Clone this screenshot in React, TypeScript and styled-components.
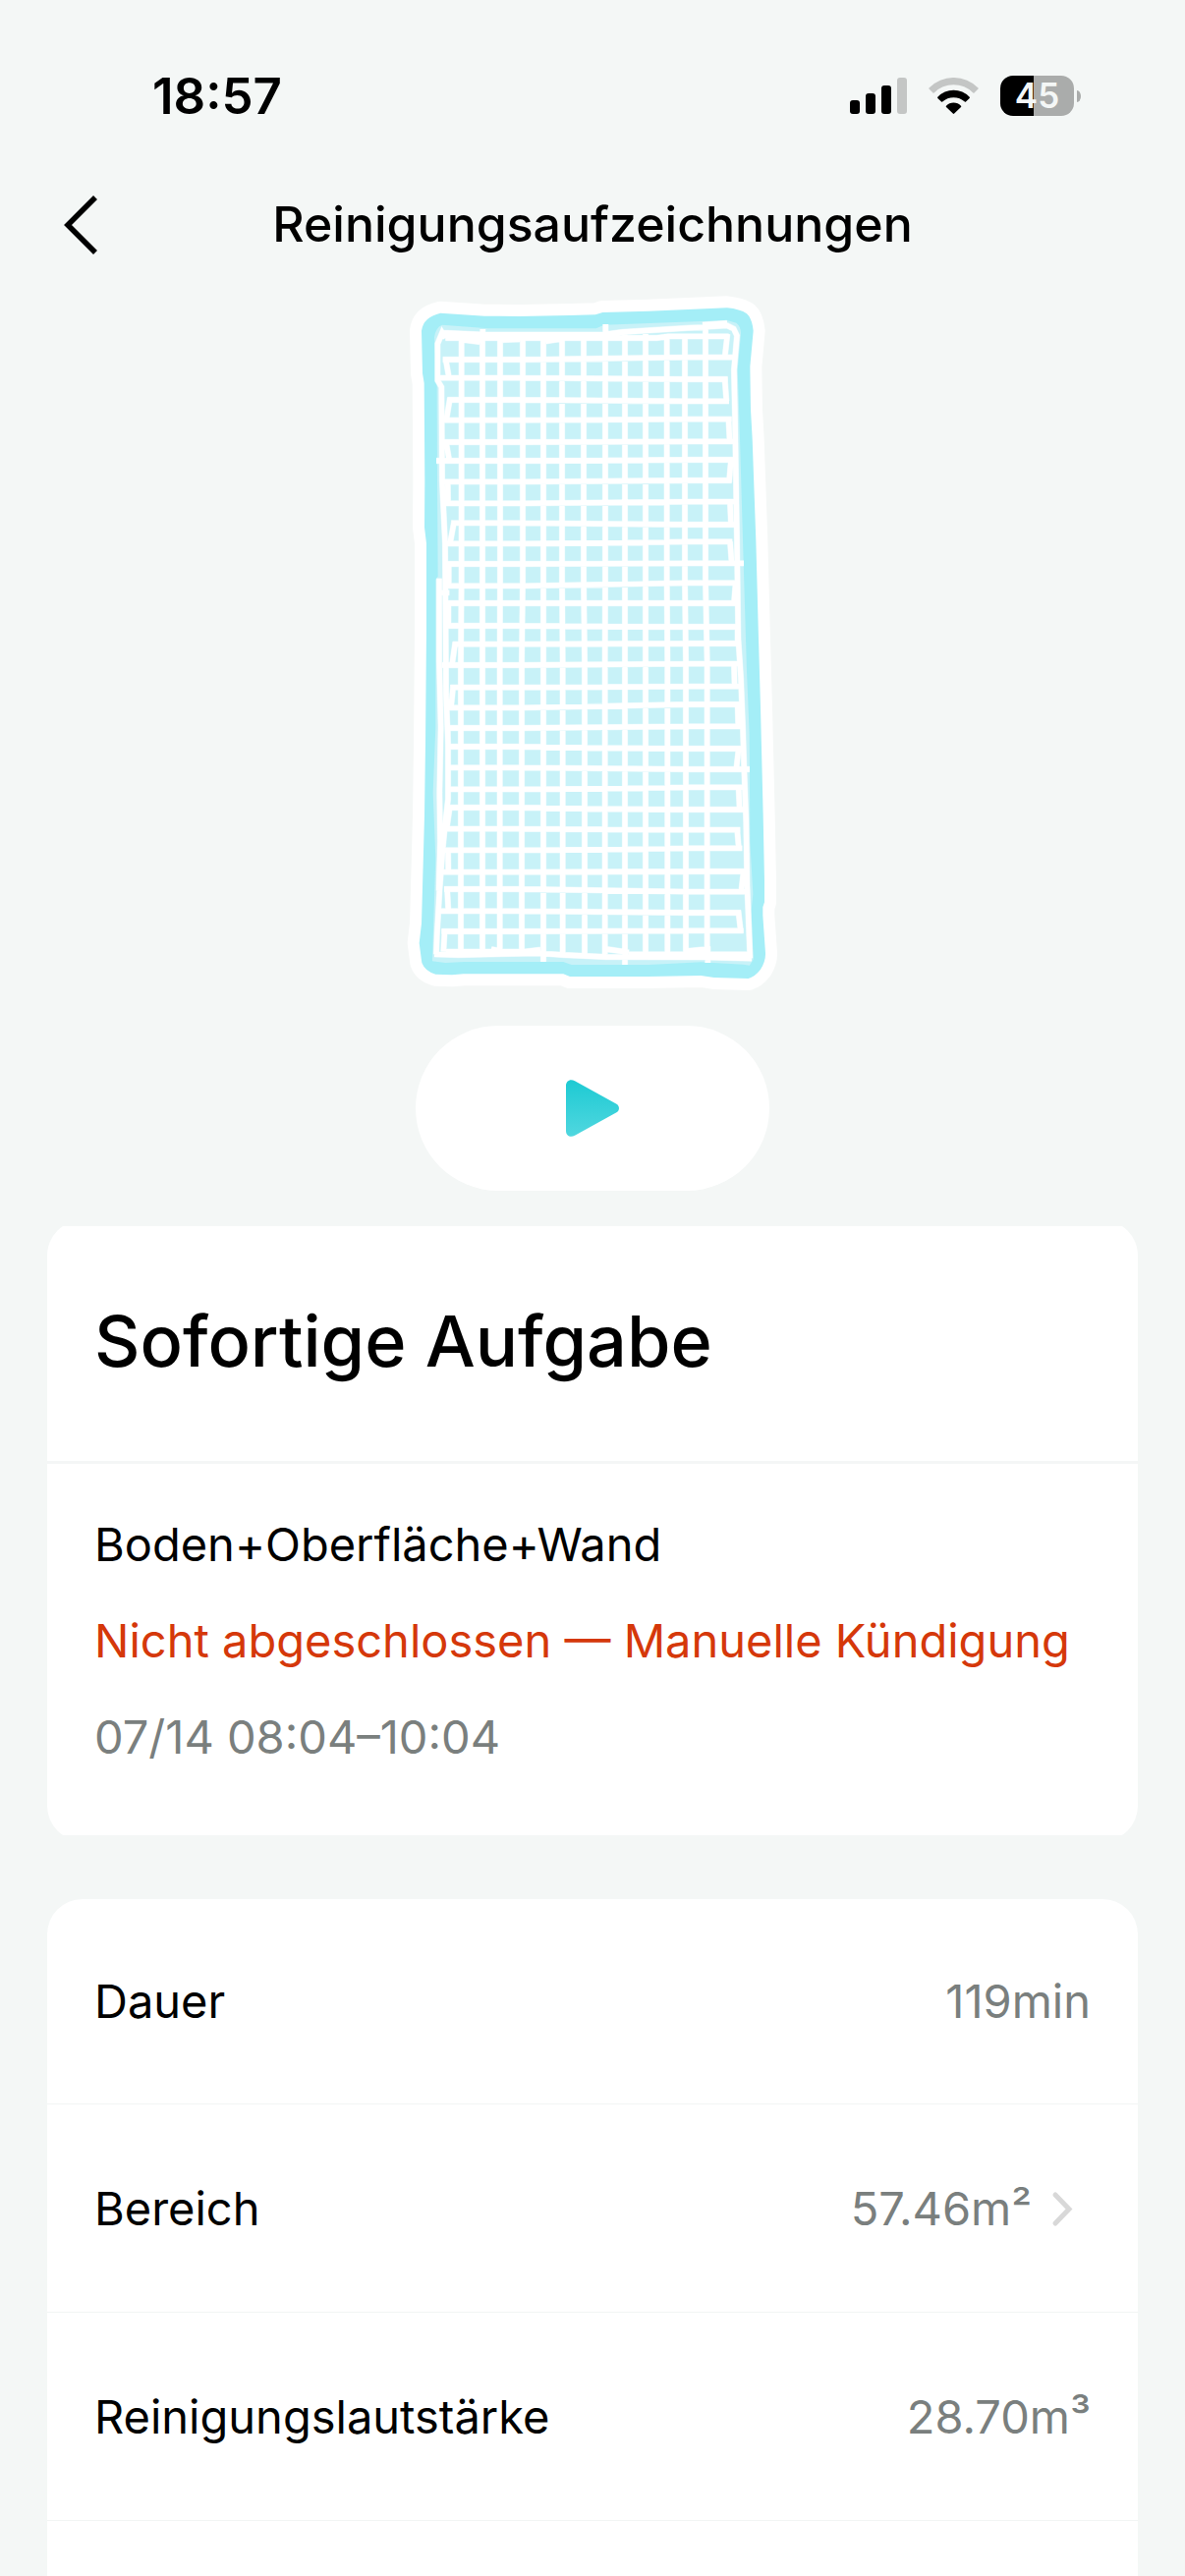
import React from "react";
import styled, { createGlobalStyle } from "styled-components";

const Global = createGlobalStyle`
  * { box-sizing: border-box; }
  body { margin: 0; background: #f4f7f6; font-family: Inter, "Liberation Sans", sans-serif; color: #000; }
  h1, h2, p, dl, dt, dd { margin: 0; }
  svg { display: block; flex: none; }
  button { font: inherit; color: inherit; padding: 0; border: 0; background: none; cursor: pointer; }
`;

const Screen = styled.main`
  display: flex;
  flex-direction: column;
  min-height: 100vh;
`;

const StatusBar = styled.header`
  display: flex;
  align-items: center;
  justify-content: space-between;
  height: 196px;
  padding: 0 106px 1px 155px;
`;

const Clock = styled.time`
  font-size: 51px;
  line-height: 60px;
  font-weight: 600;
`;

const StatusIcons = styled.div`
  display: flex;
  align-items: center;
  gap: 22px;
`;

const Battery = styled.div`
  display: flex;
  align-items: center;
  gap: 3px;
`;

const BatteryBody = styled.div`
  width: 75px;
  height: 41px;
  border-radius: 13px;
  background: linear-gradient(90deg, #000 45%, #aaacab 45%);
  color: #f4f7f6;
  font-size: 35px;
  line-height: 41px;
  font-weight: 600;
  text-align: center;
`;

const BatteryTip = styled.div`
  width: 4px;
  height: 12px;
  border-radius: 0 4px 4px 0 / 0 6px 6px 0;
  background: #aaacab;
`;

const NavBar = styled.nav`
  display: grid;
  grid-template-columns: 100px 1fr 100px;
  align-items: center;
  height: 64px;
  padding: 0 48px;
`;

const BackButton = styled.button`
  width: 64px;
  height: 64px;
`;

const PageTitle = styled.h1`
  font-size: 50px;
  line-height: 60px;
  font-weight: 500;
  text-align: center;
  white-space: nowrap;
`;

const MapArea = styled.section`
  display: flex;
  flex-direction: column;
  align-items: center;
  gap: 34px;
  padding: 30px 0 36px;
`;

const PlayButton = styled.button`
  && { background: #fff; }
  display: flex;
  align-items: center;
  justify-content: center;
  width: 360px;
  height: 168px;
  border-radius: 84px;
`;

const TaskCard = styled.section`
  margin: 0 48px 65px;
  overflow: hidden;
`;

const TaskSheet = styled.div`
  margin: -6px 0;
  padding: 6px 0;
  border-radius: 36px;
  background: #fff;
`;

const CardHead = styled.div`
  padding: 73px 48px 79px;
  border-bottom: 3px solid #f4f6f6;
`;

const TaskTitle = styled.h2`
  font-size: 72px;
  line-height: 87px;
  font-weight: 500;
`;

const TaskBody = styled.div`
  display: flex;
  flex-direction: column;
  gap: 38px;
  padding: 52px 48px 70px;
`;

const Line = styled.p<{ $color: string }>`
  color: ${(p) => p.$color};
  font-size: 47px;
  line-height: 60px;
  white-space: nowrap;
`;

const Stats = styled.dl`
  flex: 1;
  margin: 0 48px;
  border-radius: 36px 36px 0 0;
  background: #fff;
`;

const StatRow = styled.div`
  display: flex;
  align-items: center;
  justify-content: space-between;
  height: 212px;
  padding: 0 48px;
  border-bottom: 1px solid #f2f5f4;
  font-size: 47px;
  line-height: 60px;
  &:first-child { height: 209px; }
`;

const StatValue = styled.dd`
  color: #7a7f7e;
`;

const StatLink = styled.button`
  display: flex;
  align-items: center;
  gap: 20px;
`;

const OUTLINE =
  "M145 86L280 95L385 96L540 93L618 91L640 84L780 80L1020 70Q1060 74 1080 88Q1096 102 1100 140L1090 250L1092 380L1097 470L1108 780L1116 1080L1122 1290L1130 1620L1134 1820V1885L1129 1900V1925L1137 2040Q1138 2065 1122 2090Q1105 2112 1085 2118L980 2115L940 2109L780 2112H540L520 2104H215L180 2107L130 2105Q98 2096 88 2070L80 2010L87 1950L96 1620L99 1400L102 1050V790L96 740L97 600L95 300L90 270L87 140Q92 98 145 86Z";

const FLOOR =
  "M150 122L290 133H620L645 122L1020 108L1048 116Q1063 128 1062 150L1052 260L1057 400L1068 780L1080 1180L1088 1370L1090 1700L1099 1860L1094 1910L1100 2060L1088 2078L1070 2075L940 2068L780 2076H545L520 2067H215L160 2070L120 2065L130 1750L122 1550L130 1350V900L137 890L135 600L134 300L126 160Q130 130 150 122Z";

const SIDES = [
  "M160 162L150 146L136 180V292L148 312L150 600L159 790L161 1080L162 1250L168 1400V1570L160 1640L152 1720L142 1850L134 1990L132 2044",
  "M141 896V1150L146 1350L142 1550L144 1700L140 1850M145 940H172",
  "M150 146L283 152H640L700 144L1020 124L1040 134L1050 155L1041 260L1044 400L1050 780L1054 1080L1062 1200L1068 1350L1072 1480L1078 1640L1081 1830L1090 2056",
  "M160 162H806L840 157H1025",
  "M217 168L265 174M335 168L387 166M467 172L522 164",
  "M126 2044L200 2046L450 2041L520 2046L650 2052L950 2053L1095 2057",
  "M162 2036H400M300 2028L330 2034M400 2036L450 2030M650 2028L720 2038M720 2044H1090M902 2034L960 2028",
];

/* Cross lanes: x position at the top and at the bottom of the pool */
const LANES: [number, number][] = [
  [209, 207], [273, 273], [327, 326], [396, 393], [459, 459], [516, 518], [582, 585],
  [648, 647], [708, 708], [771, 771], [836, 838], [891, 894], [954, 959],
];

/* Long lanes: start x, y on the left, y on the right, end x */
const ROWS: [number, number, number, number][] = [
  [152, 228, 221, 1040], [143, 284, 288, 1022], [166, 351, 355, 1026], [156, 413, 410, 1034],
  [156, 480, 478, 1040], [132, 537, 534, 1040], [158, 601, 597, 1034], [160, 667, 662, 1045],
  [178, 727, 732, 1045], [165, 790, 784, 1036], [165, 852, 850, 1071], [160, 919, 910, 1050],
  [165, 972, 972, 1050], [165, 1041, 1044, 1060], [182, 1097, 1095, 1060],
  [150, 1161, 1157, 1060], [175, 1229, 1226, 1060], [160, 1291, 1281, 1064], [160, 1353, 1348, 1068],
  [165, 1410, 1416, 1070], [165, 1474, 1479, 1089], [165, 1540, 1534, 1078], [160, 1596, 1602, 1078],
  [155, 1661, 1664, 1060], [158, 1726, 1720, 1066], [140, 1793, 1791, 1082], [156, 1845, 1853, 1080],
  [140, 1912, 1917, 1062], [148, 1974, 1972, 1070],
];

/* Turning moves between two neighbouring long lanes */
const TURNS: [number, number, number, number][] = [
  [161, 228, 171, 284], [174, 345, 163, 412], [162, 480, 172, 537], [167, 601, 168, 667],
  [187, 720, 174, 790], [170, 852, 170, 919], [169, 972, 169, 1041], [190, 1092, 180, 1161],
  [184, 1222, 177, 1291], [167, 1353, 168, 1410], [168, 1474, 168, 1540], [173, 1596, 164, 1661],
  [168, 1720, 169, 1793], [165, 1838, 169, 1912], [158, 1968, 154, 2036],
  [1021, 150, 1013, 221], [1013, 288, 1018, 355], [1024, 403, 1028, 478], [1032, 534, 1026, 602],
  [1029, 665, 1032, 732], [1029, 784, 1034, 850], [1046, 910, 1041, 972], [1052, 1044, 1052, 1095],
  [1041, 1157, 1043, 1226], [1052, 1281, 1054, 1348], [1055, 1416, 1048, 1479], [1055, 1534, 1058, 1602],
  [1050, 1657, 1056, 1725], [1070, 1791, 1063, 1853], [1054, 1910, 1062, 1978],
];

const TICKS: [number, number, number, number][] = [
  [274, 135, 274, 170], [649, 120, 649, 170], [954, 114, 954, 170], [945, 122, 1020, 117],
  [459, 2020, 459, 2067], [708, 2020, 708, 2076], [961, 2020, 961, 2070],
];

function PoolMap() {
  const track = [
    ...SIDES,
    ...LANES.map(([top, bottom]) => `M${top} 150L${top} 900L${bottom} 1150L${bottom} 2044`),
    ...ROWS.map(([start, left, right, end]) => `M${start} ${left}H400L900 ${right}H${end}`),
    ...[...TURNS, ...TICKS].map(([x1, y1, x2, y2]) => `M${x1} ${y1}L${x2} ${y2}`),
  ].join("");
  return (
    <svg width="400" height="720" viewBox="9 0 1200 2160" fill="none" role="img" aria-label="Reinigungskarte">
      <path d={OUTLINE} fill="#fff" stroke="#fff" strokeWidth="72" strokeLinejoin="round" />
      <path d={OUTLINE} fill="#a4eef7" />
      <path d={FLOOR} fill="#c8f2f8" />
      <path d={track} stroke="#fff" strokeOpacity="0.5" strokeWidth="19" />
      <path d={track} stroke="#fff" strokeWidth="16" />
    </svg>
  );
}

function Signal() {
  return (
    <svg width="58" height="37" viewBox="0 0 58 37" aria-hidden="true">
      <rect y="23" width="10" height="14" rx="3" />
      <rect x="16" y="16" width="10" height="21" rx="3" />
      <rect x="32" y="8" width="10" height="29" rx="3" />
      <rect x="48" width="10" height="37" rx="3" fill="#c4c6c5" />
    </svg>
  );
}

function Wifi() {
  return (
    <svg width="51" height="37" viewBox="0 0 51 37" aria-hidden="true">
      <path fill="#c4c6c5" d="M.5 10.5A35 35 0 0 1 50.5 10.5Q51 11 50.5 11.5L46.5 15.5Q46 16 45.300 15.400A28 28 0 0 0 5.700 15.400Q5 16 4.500 15.500L.5 11.500Q0 11 .5 10.500Z" />
      <path d="M9.300 19.800A22 22 0 0 1 41.700 19.800Q42.200 20.400 41.700 21L38 24.600Q37.400 25.100 36.800 24.600A17 17 0 0 0 14.200 24.600Q13.600 25.100 13 24.600L9.300 21Q8.800 20.400 9.300 19.800Z" />
      <path d="M18 28.700A10.500 10.500 0 0 1 33 28.700Q33.600 29.300 33 30L26.200 36.600Q25.500 37.200 24.800 36.600L18 30Q17.400 29.300 18 28.700Z" />
    </svg>
  );
}

export default function App() {
  return (
    <Screen>
      <Global />
      <StatusBar>
        <Clock>18:57</Clock>
        <StatusIcons>
          <Signal />
          <Wifi />
          <Battery>
            <BatteryBody>45</BatteryBody>
            <BatteryTip />
          </Battery>
        </StatusIcons>
      </StatusBar>
      <NavBar>
        <BackButton aria-label="Zurück">
          <svg width="64" height="64" viewBox="0 0 64 64" fill="none" stroke="#000" strokeWidth="5.6">
            <path d="M49 5L21 33L49 61" />
          </svg>
        </BackButton>
        <PageTitle>Reinigungsaufzeichnungen</PageTitle>
      </NavBar>
      <MapArea>
        <PoolMap />
        <PlayButton aria-label="Abspielen">
          <svg width="54" height="58" viewBox="0 0 54 58">
            <defs>
              <linearGradient id="play" x1="0" y1="0" x2="0" y2="1">
                <stop offset="0" stopColor="#1dcad3" />
                <stop offset="1" stopColor="#50d7df" />
              </linearGradient>
            </defs>
            <path fill="url(#play)" d="M0 6C0 1 4.500 -1.300 9 1.200L51.500 24.700C54.800 26.700 54.800 31.300 51.500 33.300L9 56.800C4.500 59.300 0 57 0 52Z" />
          </svg>
        </PlayButton>
      </MapArea>
      <TaskCard>
        <TaskSheet>
          <CardHead>
            <TaskTitle>Sofortige Aufgabe</TaskTitle>
          </CardHead>
          <TaskBody>
            <Line $color="#000">Boden+Oberfläche+Wand</Line>
            <Line $color="#d5380a">Nicht abgeschlossen — Manuelle Kündigung</Line>
            <Line $color="#7a7f7e">07/14 08:04–10:04</Line>
          </TaskBody>
        </TaskSheet>
      </TaskCard>
      <Stats>
        <StatRow>
          <dt>Dauer</dt>
          <StatValue>119min</StatValue>
        </StatRow>
        <StatRow>
          <dt>Bereich</dt>
          <StatValue>
            <StatLink>
              57.46m²
              <svg width="40" height="40" viewBox="0 0 40 40" fill="none" stroke="#d8d8d8" strokeWidth="5" strokeLinecap="round" aria-hidden="true">
                <path d="M4 6L18 20.500L4 35" />
              </svg>
            </StatLink>
          </StatValue>
        </StatRow>
        <StatRow>
          <dt>Reinigungslautstärke</dt>
          <StatValue>28.70m³</StatValue>
        </StatRow>
      </Stats>
    </Screen>
  );
}
